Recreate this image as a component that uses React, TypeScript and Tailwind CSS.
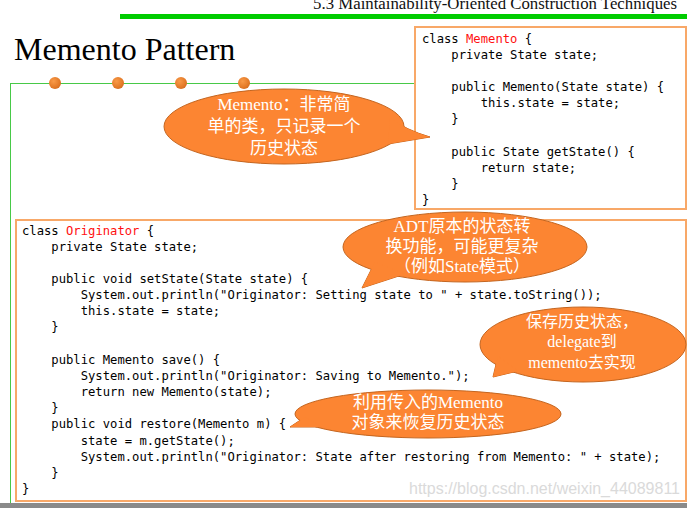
import React from 'react';

type Seg = { t: string; red?: boolean };

const mementoCode: Seg[][] = [
  [{ t: 'class ' }, { t: 'Memento', red: true }, { t: ' {' }],
  [{ t: '    private State state;' }],
  [{ t: '' }],
  [{ t: '    public Memento(State state) {' }],
  [{ t: '        this.state = state;' }],
  [{ t: '    }' }],
  [{ t: '' }],
  [{ t: '    public State getState() {' }],
  [{ t: '        return state;' }],
  [{ t: '    }' }],
  [{ t: '}' }],
];

const originatorCode: Seg[][] = [
  [{ t: 'class ' }, { t: 'Originator', red: true }, { t: ' {' }],
  [{ t: '    private State state;' }],
  [{ t: '' }],
  [{ t: '    public void setState(State state) {' }],
  [{ t: '        System.out.println("Originator: Setting state to " + state.toString());' }],
  [{ t: '        this.state = state;' }],
  [{ t: '    }' }],
  [{ t: '' }],
  [{ t: '    public Memento save() {' }],
  [{ t: '        System.out.println("Originator: Saving to Memento.");' }],
  [{ t: '        return new Memento(state);' }],
  [{ t: '    }' }],
  [{ t: '    public void restore(Memento m) {' }],
  [{ t: '        state = m.getState();' }],
  [{ t: '        System.out.println("Originator: State after restoring from Memento: " + state);' }],
  [{ t: '    }' }],
  [{ t: '}' }],
];

function Code({ lines }: { lines: Seg[][] }) {
  return (
    <pre className="font-['DejaVu_Sans_Mono',monospace] text-[12.2px] leading-[16.17px] text-black whitespace-pre">
      {lines.map((line, i) => (
        <div key={i} className="h-[16.17px]">
          {line.map((s, j) =>
            s.red ? (
              <span key={j} className="text-[#ff1010]">
                {s.t}
              </span>
            ) : (
              <span key={j}>{s.t}</span>
            )
          )}
        </div>
      ))}
    </pre>
  );
}

const FILL = '#fc8532';
const EDGE = '#c4651f';

function BubbleShape({
  cx,
  cy,
  rx,
  ry,
  tail,
}: {
  cx: number;
  cy: number;
  rx: number;
  ry: number;
  tail: string;
}) {
  return (
    <g>
      <path d={tail} fill={FILL} stroke={EDGE} strokeWidth={1} strokeLinejoin="round" />
      <ellipse cx={cx} cy={cy} rx={rx} ry={ry} fill={FILL} stroke={EDGE} strokeWidth={1} />
      <path d={tail} fill={FILL} />
    </g>
  );
}

export default function App() {
  return (
    <div className="relative w-[687px] h-[508px] overflow-hidden bg-white">
      {/* header */}
      <div className="h-[20px] flex flex-col">
        <div className="h-[14px] -mt-[4px] pr-[10px] text-right font-['Liberation_Serif',serif] text-[16.8px] leading-[15px] text-[#111] whitespace-nowrap">
          5.3 Maintainability-Oriented Construction Techniques
        </div>
        <div className="mt-[4px] ml-[120px] h-[5px] bg-[#00cc00]" />
      </div>

      {/* title */}
      <div className="h-[63px] pl-[14px] pt-[13px]">
        <h1 className="font-['Liberation_Serif',serif] text-[32px] leading-none text-black">Memento Pattern</h1>
      </div>

      {/* green frame */}
      <div className="relative ml-[10px] h-[420px] border-l border-t border-[#47c947] flex flex-col">
        <div className="absolute -top-[7px] left-[38px] flex gap-[51px]">
          {[0, 1, 2, 3].map((i) => (
            <div
              key={i}
              className="w-[12px] h-[12px] rounded-full bg-[radial-gradient(circle_at_38%_35%,#f99a48,#e27826_60%,#c25f18)]"
            />
          ))}
        </div>

        <div className="self-end w-[273px] h-[184px] -mt-[58px] border-2 border-[#f8a868] bg-white pl-[6px] pt-[2.5px]">
          <Code lines={mementoCode} />
        </div>

        <div className="ml-[4px] mt-[9px] mb-[1px] flex-1 border-2 border-[#f8a868] bg-white pl-[5px] pt-[1.5px]">
          <Code lines={originatorCode} />
        </div>
      </div>

      <div className="h-[5px] bg-[#8a8a8a]" />

      {/* callout shapes */}
      <svg className="absolute inset-0 pointer-events-none" width={687} height={508} viewBox="0 0 687 508">
        <BubbleShape cx={284} cy={126.5} rx={120} ry={37.5} tail="M390 118 Q406 130 430 137 L388 144 Z" />
        <BubbleShape cx={465} cy={247} rx={122} ry={35} tail="M375 262 L362 288 L405 274 Z" />
        <BubbleShape cx={583} cy={344.5} rx={103} ry={37.5} tail="M498 356 L493 377 L518 371 Z" />
        <BubbleShape cx={428} cy={414} rx={133} ry={24} tail="M305 417 L290 427 L322 427 Z" />
      </svg>

      {/* callout texts */}
      <div className="absolute top-[94px] left-[184px] w-[200px] text-center text-white font-['Liberation_Serif','Noto_Sans_CJK_SC',serif] text-[17px] leading-[22px]">
        <div>Memento：非常简</div>
        <div>单的类，只记录一个</div>
        <div>历史状态</div>
      </div>

      <div className="absolute top-[217px] left-[362px] w-[200px] text-center text-white font-['Liberation_Serif','Noto_Sans_CJK_SC',serif] text-[17px] leading-[20px]">
        <div>ADT原本的状态转</div>
        <div>换功能，可能更复杂</div>
        <div>（例如State模式）</div>
      </div>

      <div className="absolute top-[311.5px] left-[482px] w-[200px] text-center text-white font-['Liberation_Serif','Noto_Sans_CJK_SC',serif] text-[16px] leading-[20.5px]">
        <div>保存历史状态，</div>
        <div>delegate到</div>
        <div>memento去实现</div>
      </div>

      <div className="absolute top-[393px] left-[318px] w-[220px] text-center text-white font-['Liberation_Serif','Noto_Sans_CJK_SC',serif] text-[17px] leading-[19.5px]">
        <div>利用传入的Memento</div>
        <div>对象来恢复历史状态</div>
      </div>

      {/* watermark */}
      <div className="absolute top-[481px] left-[409px] font-['Liberation_Sans',sans-serif] text-[16px] leading-none text-[#dadada] whitespace-nowrap">
        https://blog.csdn.net/weixin_44089811
      </div>
    </div>
  );
}
